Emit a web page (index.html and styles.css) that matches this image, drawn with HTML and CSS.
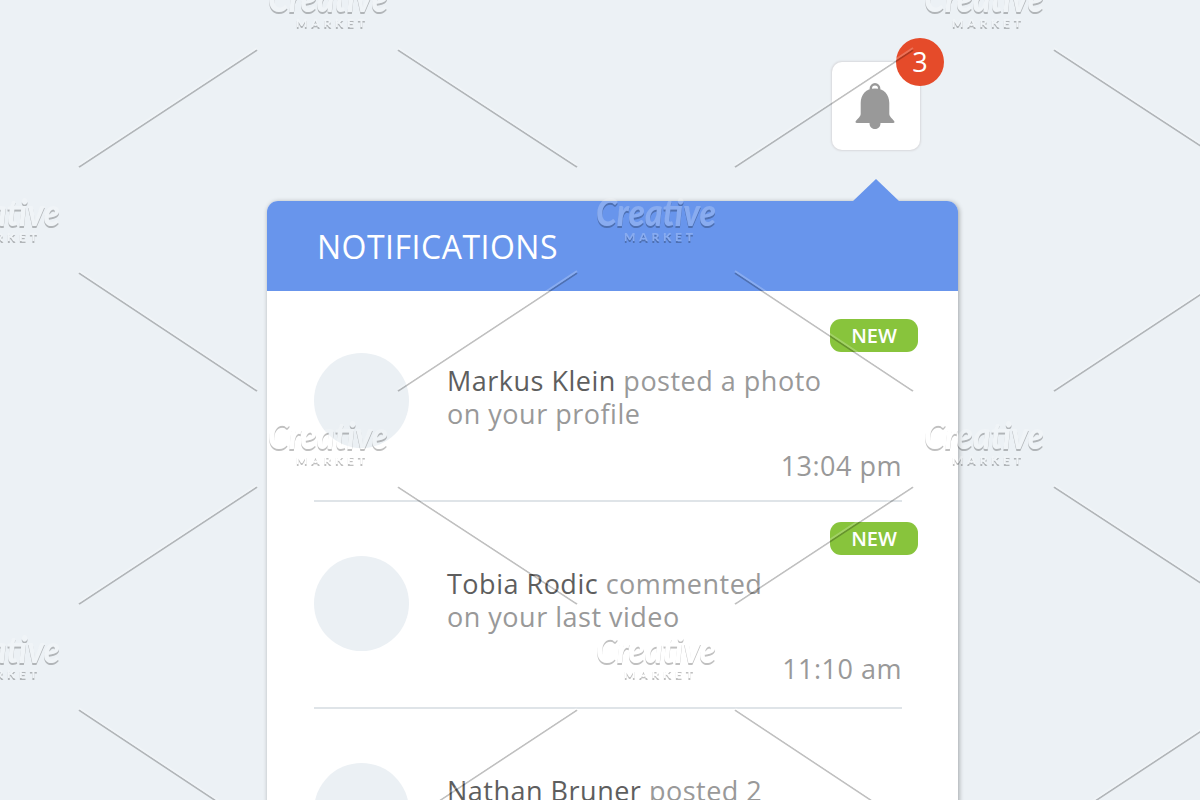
FILE: index.html
```html
<!DOCTYPE html>
<html lang="en">
<head>
    <meta charset="UTF-8">
    <meta name="viewport" content="width=device-width, initial-scale=1.0">
    <title>Notifications</title>
    <link rel="stylesheet" href="styles.css">
</head>
<body>
<div class="page">
    <!-- Bell button -->
    <div class="toolbar">
        <button class="bell" aria-label="Notifications">
            <svg width="40" height="46" viewBox="0 0 40 46">
                <circle cx="20" cy="5.5" r="4.2" fill="none" stroke="#999" stroke-width="2.4"/>
                <path fill="#999" d="M20 5.5C11 5.5 5.7 11.500 5.700 20V31C5.700 34 0.500 37.500 0.500 39Q0.500 40 2 40H14.500C14.500 43.500 16.500 46 20 46S25.500 43.500 25.500 40H38Q39.500 40 39.500 39C39.500 37.500 34.300 34 34.300 31V20C34.300 11.500 29 5.500 20 5.500Z"/>
            </svg>
            <span class="count">3</span>
        </button>
    </div>

    <!-- Dropdown -->
    <div class="panel">
        <div class="panel-header">
            <h1>NOTIFICATIONS</h1>
        </div>
        <ul class="list">
            <li class="item">
                <span class="new">NEW</span>
                <div class="row">
                    <div class="avatar"></div>
                    <p><strong>Markus Klein</strong> posted a photo<br>on your profile</p>
                </div>
                <time>13:04 pm</time>
            </li>
            <li class="item">
                <span class="new">NEW</span>
                <div class="row">
                    <div class="avatar"></div>
                    <p><strong>Tobia Rodic</strong> commented<br>on your last video</p>
                </div>
                <time>11:10 am</time>
            </li>
            <li class="item">
                <div class="row">
                    <div class="avatar"></div>
                    <p><strong>Nathan Bruner</strong> posted 2</p>
                </div>
            </li>
        </ul>
    </div>
</div>

<!-- Watermark -->
<svg class="watermark" width="1200" height="800" viewBox="0 0 1200 800">
    <defs>
        <filter id="emboss" filterUnits="userSpaceOnUse" x="0" y="0" width="1200" height="800" color-interpolation-filters="sRGB">
            <feOffset in="SourceAlpha" dy="2" result="moved"/>
            <feComposite in="moved" in2="SourceAlpha" operator="out" result="edge"/>
            <feComponentTransfer in="edge" result="dark">
                <feFuncA type="linear" slope="0.25"/>
            </feComponentTransfer>
            <feComponentTransfer in="SourceGraphic" result="light">
                <feFuncA type="linear" slope="0.22"/>
            </feComponentTransfer>
            <feMerge>
                <feMergeNode in="dark"/>
                <feMergeNode in="light"/>
            </feMerge>
        </filter>
        <g id="mark">
            <text class="mark-name" x="-60" y="12" textLength="120" lengthAdjust="spacingAndGlyphs">Creative</text>
            <text class="mark-sub" x="-32" y="27" textLength="69">MARKET</text>
        </g>
        <path id="rays" d="M-249 165L-71 48M70 48L249 165M-249 271L-71 389M70 389L249 271"/>
    </defs>
    <g filter="url(#emboss)">
        <use href="#mark" x="328" y="0"/>
        <use href="#mark" x="984" y="0"/>
        <use href="#mark" x="0" y="214"/>
        <use href="#mark" x="656" y="214"/>
        <use href="#mark" x="328" y="437"/>
        <use href="#mark" x="984" y="437"/>
        <use href="#mark" x="0" y="651"/>
        <use href="#mark" x="656" y="651"/>
        <g class="rays">
            <use href="#rays" x="328" y="0"/>
            <use href="#rays" x="984" y="0"/>
            <use href="#rays" x="328" y="437"/>
            <use href="#rays" x="984" y="437"/>
        </g>
    </g>
</svg>
</body>
</html>
```
FILE: styles.css
```css
* {
    box-sizing: border-box;
}

body {
    margin: 0;
    height: 800px;
    overflow: hidden;
    background: #ecf1f5;
    color: #999;
    font-family: "Open Sans", "Noto Sans", sans-serif;
}

.page {
    width: 691px;
    margin-left: 267px;
    padding-top: 62px;
}

/* Bell button */
.toolbar {
    display: flex;
    justify-content: flex-end;
    padding-right: 38px;
}

.bell {
    position: relative;
    display: flex;
    align-items: center;
    justify-content: center;
    width: 88px;
    height: 88px;
    padding: 0 3px 0 0;
    border: none;
    border-radius: 10px;
    background: #fff;
    box-shadow: 0 0 2px 1px rgba(90, 60, 60, 0.13);
}

.count {
    position: absolute;
    top: -24px;
    right: -24px;
    width: 48px;
    height: 48px;
    border-radius: 50%;
    background: #e54b2a;
    color: #fff;
    font-family: "Open Sans", "Noto Sans", sans-serif;
    font-size: 27px;
    line-height: 47px;
    text-align: center;
}

/* Panel */
.panel {
    position: relative;
    height: 640px;
    margin-top: 51px;
    border-radius: 11px 11px 0 0;
    background: #fff;
    box-shadow: 1px 1px 5px rgba(0, 0, 0, 0.33);
}

.panel::before {
    content: "";
    position: absolute;
    top: -22px;
    right: 58px;
    border: 24px solid transparent;
    border-top: none;
    border-bottom: 23px solid #6895ec;
}

.panel-header {
    display: flex;
    align-items: center;
    height: 90px;
    padding: 0 50px;
    border-radius: 11px 11px 0 0;
    background: #6895ec;
}

h1 {
    margin: 0;
    color: #fff;
    font-size: 32px;
    font-weight: 400;
    letter-spacing: 0.5px;
}

/* List */
.list {
    margin: 0;
    padding: 8px 56px 0 47px;
    list-style: none;
}

.item {
    position: relative;
    height: 207px;
    padding-top: 54px;
    border-bottom: 2px solid #dfe4e8;
}

.item:first-child {
    height: 203px;
}

.row {
    display: flex;
    gap: 38px;
}

.avatar {
    width: 95px;
    height: 95px;
    border-radius: 50%;
    background: #ebf0f4;
}

.item p {
    margin: 11px 0 0;
    font-size: 27px;
    line-height: 33px;
    letter-spacing: 0.5px;
    white-space: nowrap;
}

.item strong {
    color: #5e5e5e;
    font-weight: 500;
}

time {
    display: block;
    font-size: 27px;
    line-height: 36px;
    letter-spacing: 0.5px;
    text-align: right;
}

.new {
    position: absolute;
    top: 20px;
    right: -16px;
    width: 88px;
    height: 33px;
    border-radius: 11px;
    background: #88c43c;
    color: #fff;
    font-size: 20px;
    font-weight: 600;
    line-height: 33px;
    text-align: center;
}

/* Watermark */
.watermark {
    position: absolute;
    top: 0;
    left: 0;
    pointer-events: none;
}

.mark-name,
.mark-sub {
    fill: #fff;
    font-family: Lato, sans-serif;
    font-weight: 900;
}

.mark-name {
    font-size: 38px;
    font-style: italic;
}

.mark-sub {
    font-size: 12px;
}

.rays {
    fill: none;
    stroke: #fff;
    stroke-width: 2;
}
```
